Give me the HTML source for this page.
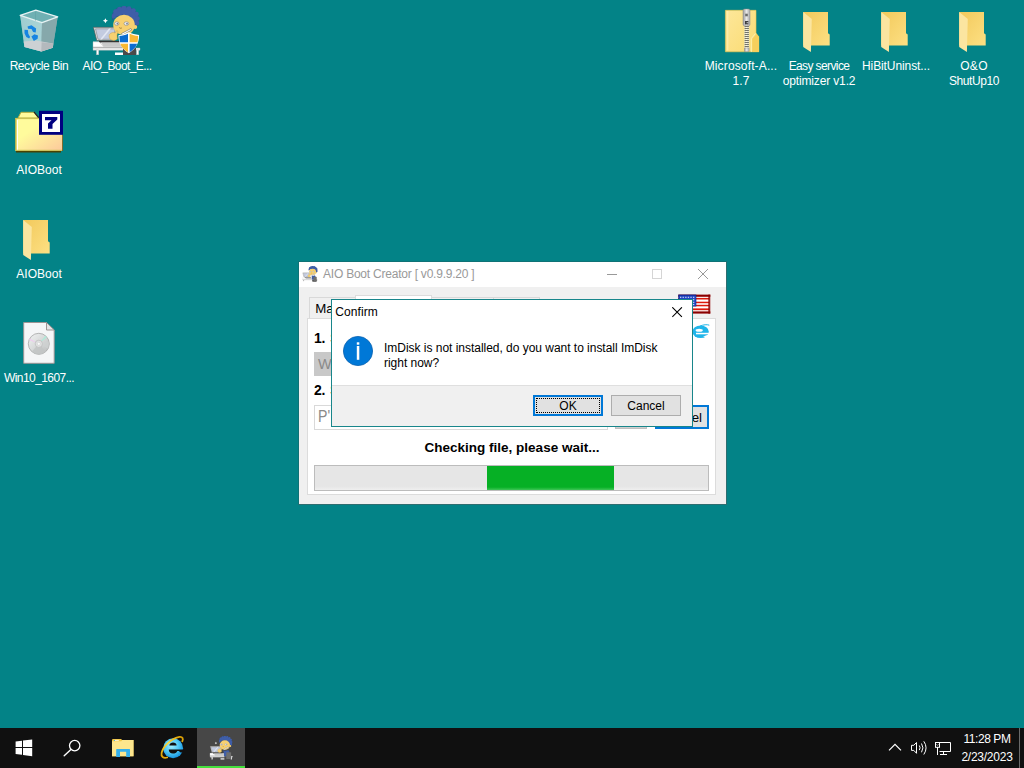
<!DOCTYPE html>
<html><head><meta charset="utf-8"><title>Desktop</title>
<style>
*{box-sizing:border-box;margin:0;padding:0}
html,body{width:1024px;height:768px;overflow:hidden}
body{background:#038387;font-family:"Liberation Sans",sans-serif;font-size:12px;position:relative;color:#000}
.abs{position:absolute}
.lbl{position:absolute;width:100px;text-align:center;color:#fff;font-size:12px;line-height:15px;white-space:nowrap;margin-top:1px}
#taskbar{position:absolute;left:0;top:728px;width:1024px;height:40px;background:#101010}
#win{position:absolute;left:298px;top:261px;width:429px;height:244px;background:#f0f0f0;border:1px solid #0f7276;border-right-color:#2e6d70;border-bottom-color:#2e6d70}
#title{position:absolute;left:0;top:0;width:427px;height:25px;background:#fff}
#dlg{position:absolute;left:331px;top:299px;width:362px;height:128px;background:#fff;border:1px solid #18868b}

#title .tt{position:absolute;left:24px;top:5px;font-size:12px;line-height:15px;color:#999;letter-spacing:-0.22px;white-space:nowrap}
.tab{position:absolute;background:#f0f0f0;border:1px solid #d9d9d9;border-bottom:none}
#pane{position:absolute;left:8px;top:56px;width:409px;height:177px;background:#fff;border:1px solid #dcdcdc}
.b{font-weight:700;font-size:14px;line-height:15px;letter-spacing:-.4px;word-spacing:1.800px;position:absolute;white-space:nowrap}
#dlg .cap{position:absolute;left:3.3px;top:5px;font-size:12px;line-height:15px;letter-spacing:0.08px}
#dlg .msg{position:absolute;left:52px;top:41px;font-size:12px;line-height:15px;white-space:nowrap;letter-spacing:-0.025px}
#dlg .foot{position:absolute;left:0;top:85px;width:360px;height:41px;background:#f0f0f0;border-top:1px solid #dfdfdf}
.btn{position:absolute;height:21px;width:70px;background:#e1e1e1;border:1px solid #adadad;font-size:12px;line-height:20px;text-align:center}
</style></head><body>

<!-- DESKTOP ICONS -->
<div id="desk">
<svg class="abs" style="left:18px;top:8px" width="42" height="46" viewBox="18 8 42 46">
<defs><linearGradient id="rbl" x1="0" y1="0" x2="1" y2="0"><stop offset="0" stop-color="#9fcdd0"/><stop offset="1" stop-color="#a9d3d6"/></linearGradient></defs>
<path d="M20.2 15.4L35.8 10.2L57.7 16.8L52.8 47.7L41.3 51.6L24.5 46.9Z" fill="#8ab0b3"/>
<path d="M20.2 15.4L42 22.7L41.3 51.6L24.5 46.9Z" fill="url(#rbl)"/>
<path d="M42 22.7L57.7 16.8L52.8 47.7L41.3 51.6Z" fill="#86a8ab"/>
<path d="M23.6 41.5L36 40.6L52.9 43.5L52.8 47.7L41.3 51.6L24.5 46.9Z" fill="#cdd1d4"/>
<path d="M41.6 42.2L53.3 43.6L52.8 47.7L41.3 51.6Z" fill="#b4b9bd"/>
<path d="M20.2 15.4L35.8 10.2L57.7 16.8L42 22.7Z" fill="#6fb0b3" stroke="#e6f2f3" stroke-width="1.3" stroke-linejoin="round"/>
<path d="M35 12L36 12L36 21L35 20.6Z" fill="#5f9ea1" opacity=".5"/>
<g fill="#1684e2"><path d="M27.5 26.5l4-1.3 4.6 3.4-.4 4-2.6-.6-1.6-3-3.4-.3z"/><path d="M24.5 29.7l3.4.4.4 3.6 1.8 3.4-1 1.3-2.800-1.500-1.800-3.600z"/><path d="M31.400 36.600l3-2.300 3.600 1.200-.400 3.300-3.800 2.300z"/></g>
</svg>
<div class="lbl" style="left:-11px;top:58px;letter-spacing:-0.42px">Recycle Bin</div>
<svg class="abs" style="left:91px;top:6px" width="50" height="50" viewBox="91 6 50 50">
<path d="M93.400 27.300H117L114.500 40.600H96.800Z" fill="#e2e2e2" stroke="#5a5a5a" stroke-width=".7"/><path d="M95.500 28.800H115.200L113.200 39.300H98Z" fill="#c3cbe0" stroke="#6e6e6e" stroke-width=".5"/><path d="M100 39.500L109 28.500H111L102 39.500Z" fill="#e3e7f2"/>
<path d="M93 41.800H122V48H93Z" fill="#fff"/><path d="M99 40.900H119.500V42.600H99Z" fill="#333"/><path d="M101 42.600H121L122 46.600H103.500Z" fill="#c9c9c9"/>
<path d="M93 41.800H99L103.500 46.600H122V48H93Z" fill="#fff" stroke="#b4b4b4" stroke-width=".4"/><path d="M93 48H140V50.200H93Z" fill="#f2f2f2" stroke="#b4b4b4" stroke-width=".4"/><path d="M93 47.300H122" stroke="#9a9a9a" stroke-width=".8"/>
<rect x="96.500" y="50" width="2.200" height="4.800" fill="#fff" stroke="#b4b4b4" stroke-width=".4"/><rect x="136.500" y="50" width="2.200" height="4.800" fill="#fff" stroke="#b4b4b4" stroke-width=".4"/>
<rect x="123" y="48" width="13" height="7" fill="#4a4a4a"/><path d="M115 52.500h8v2.500h-8z" fill="#fff"/>
<path d="M112.500 20c-1.500-6 2-12 8-12.600 6-1.400 12 .4 15.500 4.600 3 4 3 9 1.500 13.500l-3 .5-4-8-8-3-7 2z" fill="#3f5ea8" stroke="#2f4a8c" stroke-width=".6"/>
<circle cx="114" cy="16" r="2.300" fill="#3f5ea8"/><circle cx="115.5" cy="11.5" r="2.300" fill="#3f5ea8"/><circle cx="119.5" cy="9" r="2.300" fill="#3f5ea8"/><circle cx="124" cy="8" r="2.300" fill="#3f5ea8"/><circle cx="129" cy="8.5" r="2.300" fill="#3f5ea8"/><circle cx="133.5" cy="10.5" r="2.300" fill="#3f5ea8"/><circle cx="136.5" cy="14" r="2.300" fill="#3f5ea8"/><circle cx="137.5" cy="18.5" r="2.300" fill="#3f5ea8"/><circle cx="137" cy="23" r="2.300" fill="#3f5ea8"/><ellipse cx="124" cy="25" rx="10.800" ry="10.200" fill="#f7d070"/><circle cx="135.200" cy="27" r="2" fill="#f7d070"/>
<ellipse cx="116.800" cy="23.600" rx="2.200" ry="1.800" fill="#eef0f6" stroke="#777" stroke-width=".5"/><ellipse cx="126.400" cy="23.600" rx="2.400" ry="1.800" fill="#eef0f6" stroke="#777" stroke-width=".5"/><circle cx="117.400" cy="23.700" r=".9" fill="#7a7f8c"/><circle cx="127" cy="23.700" r=".9" fill="#7a7f8c"/>
<path d="M121.500 33.500L131 28.500L131.600 30L122.500 35Z" fill="#fff" stroke="#555" stroke-width=".5"/>
<path d="M119.300 27.500c.8 1 2 1 2.600.2" fill="none" stroke="#6b5020" stroke-width=".6"/>
<path d="M109.500 34.500c1.500-2 4-2.500 5.500-1.500l1.800-2.500c1 .2 1.400 1.200 1 2.200l-.8 2.300.3 4c-1.500 1.800-5 1.800-7 .3-1.200-1.500-1.500-3.300-.8-4.800z" fill="#f7d070" stroke="#c79a3a" stroke-width=".4"/>
<path d="M105.400 18.200l.9 1.800 1.700.7-1.700.7-.9 1.900-.9-1.900-1.700-.7 1.700-.7z" fill="#fff"/>
<path d="M118.400 35.200c3.500-.3 7-1.300 10.400-2.900 3.200 1.500 6.600 2.400 10.300 2.700 0 8-3.300 14-10.300 18.200-7-4.200-10.400-10.200-10.400-18z" fill="#fff"/>
<path d="M119.400 36.100c3-.3 5.800-1.100 8.600-2.400V42.200H119.900c-.3-1.900-.5-4-.5-6.100z" fill="#0c6cd0"/><path d="M129.600 33.700c2.700 1.200 5.500 2 8.500 2.300 0 2.200-.2 4.300-.6 6.200h-7.900z" fill="#f9b934"/><path d="M120.300 43.800H128v8.400c-4.100-2.600-6.600-5-7.700-8.400z" fill="#f9b934"/><path d="M129.600 43.800h7.500c-1.100 3.400-3.500 6-7.500 8.500z" fill="#0c6cd0"/>
</svg>
<div class="lbl" style="left:67px;top:58px;letter-spacing:-0.59px">AIO_Boot_E...</div>
<svg class="abs" style="left:14px;top:108px" width="52" height="46" viewBox="14 108 52 46">
<defs><linearGradient id="z7" x1="0" y1="0" x2="1" y2="1"><stop offset=".35" stop-color="#fffb9c"/><stop offset="1" stop-color="#fcc89c"/></linearGradient></defs>
<path d="M16 152.400H61V150H16Z" fill="#4a4200"/><path d="M62 135V151H63V135Z" fill="#4a4200"/>
<path d="M18 118L21 112.300H34.500L38.500 118Z" fill="#fffb9c" stroke="#b5ad3c" stroke-width="1"/><path d="M34 112l4.800 5.800" stroke="#222" stroke-width="1.200"/>
<rect x="15.300" y="118" width="47" height="32.800" fill="url(#z7)"/><path d="M15.800 118V150.800" stroke="#b5ad3c" stroke-width="1.200"/><path d="M15.300 118.500H40" stroke="#c9c257" stroke-width="1.200"/><path d="M17.500 120V150" stroke="#fff" stroke-width="1"/><path d="M15.300 150.300H62" stroke="#c9c257" stroke-width="1"/>
<rect x="39" y="110.800" width="24" height="24" fill="#000080"/><rect x="42" y="114" width="18" height="18" fill="#fff"/>
<path d="M45 117H57.300V119.500L52.500 124V128.800H48V123.500L51.500 120.300H45Z" fill="#000080"/>
</svg>
<div class="lbl" style="left:-11px;top:162px;letter-spacing:0.02px">AIOBoot</div>
<svg class="abs" style="left:23px;top:220px" width="28" height="42" viewBox="0 0 28 42"><defs><linearGradient id="fg0" x1="0" y1="0" x2="1" y2="1"><stop offset="0" stop-color="#f2c95c"/><stop offset="1" stop-color="#fde083"/></linearGradient></defs><path d="M.2 0H25V21.3L26.7 22.6V33.6H.2Z" fill="url(#fg0)"/><path d="M.2 0L8.8 7.1L7.9 40L.2 35Z" fill="#fbe5a0"/></svg>
<div class="lbl" style="left:-11px;top:266px;letter-spacing:0.02px">AIOBoot</div>
<svg class="abs" style="left:22px;top:321px" width="34" height="44" viewBox="22 321 34 44">
<defs><linearGradient id="cd" x1="0" y1="0" x2="1" y2="1"><stop offset="0" stop-color="#f2f4f4"/><stop offset=".5" stop-color="#d6d8d8"/><stop offset="1" stop-color="#b9bbbb"/></linearGradient></defs>
<path d="M23.700 322.500H46.500L54.200 330V363.300H23.700Z" fill="#f5f6f7" stroke="#9d9494" stroke-width="1"/>
<path d="M46.500 322.500V330H54.200Z" fill="#e4e5e6" stroke="#9d9494" stroke-width="1" stroke-linejoin="round"/>
<circle cx="38.800" cy="343.800" r="10.500" fill="url(#cd)" stroke="#a5a5a5" stroke-width=".8"/>
<clipPath id="cdc"><circle cx="38.800" cy="343.800" r="10.400"/></clipPath><path d="M38.800 343.800L28 356H50Z" fill="#c2c4c4" opacity=".85" clip-path="url(#cdc)"/><path d="M38.800 343.800L50 341V350Z" fill="#cfd1d1" opacity=".7" clip-path="url(#cdc)"/>
<path d="M38.800 343.800L46.800 337.200L45.500 335.800Z" fill="#a8ecd8" opacity=".85"/><path d="M38.800 343.800L29 340L29.600 338.500Z" fill="#f0c8ee" opacity=".85"/>
<circle cx="38.800" cy="343.800" r="3.600" fill="#e0e1e1" stroke="#b5b5b5" stroke-width=".6"/><circle cx="38.800" cy="343.800" r="1.500" fill="#fafafa" stroke="#c0c0c0" stroke-width=".4"/>
</svg>
<div class="lbl" style="left:-11px;top:370px;letter-spacing:-0.57px">Win10_1607...</div>
<svg class="abs" style="left:722px;top:6px" width="40" height="48" viewBox="722 6 40 48">
<defs><linearGradient id="zf" x1="0" y1="0" x2="1" y2="1"><stop offset="0" stop-color="#fde79a"/><stop offset="1" stop-color="#fadb72"/></linearGradient><linearGradient id="zp" x1="0" y1="0" x2="1" y2="0"><stop offset="0" stop-color="#9a9a9a"/><stop offset=".5" stop-color="#e8e8e8"/><stop offset="1" stop-color="#a8a8a8"/></linearGradient></defs>
<path d="M725.400 10.300H756V33L758.800 36.700V51.800H725.400Z" fill="url(#zf)" stroke="#f0c64e" stroke-width=".6"/>
<path d="M727.800 11V50.500" stroke="#fff4c0" stroke-width=".8"/><path d="M751.300 52V38.500L755.500 33.500" stroke="#fff0b0" stroke-width="1" fill="none"/><path d="M752.300 52V39L756.200 34.200L759 36.700V52Z" fill="#f7cf5c"/>
<rect x="744.300" y="25" width="4.900" height="24" fill="#e9e4c8"/><rect x="744.600" y="26.0" width="4.300" height="1" fill="#74746a"/><rect x="744.600" y="28.0" width="4.300" height="1" fill="#74746a"/><rect x="744.600" y="30.0" width="4.300" height="1" fill="#74746a"/><rect x="744.600" y="32.0" width="4.300" height="1" fill="#74746a"/><rect x="744.600" y="34.0" width="4.300" height="1" fill="#74746a"/><rect x="744.600" y="36.0" width="4.300" height="1" fill="#74746a"/><rect x="744.600" y="38.0" width="4.300" height="1" fill="#74746a"/><rect x="744.600" y="40.0" width="4.300" height="1" fill="#74746a"/><rect x="744.600" y="42.0" width="4.300" height="1" fill="#74746a"/><rect x="744.600" y="44.0" width="4.300" height="1" fill="#74746a"/><rect x="744.600" y="46.0" width="4.300" height="1" fill="#74746a"/><path d="M746.700 25V48" stroke="#fffdf0" stroke-width=".9" stroke-dasharray="1 1"/>
<rect x="743" y="9" width="7" height="16.800" rx="1.500" fill="url(#zp)" stroke="#8a8a8a" stroke-width=".5"/><rect x="745.200" y="13.700" width="2.600" height="2.600" fill="#6a6a6a"/><rect x="745" y="21" width="3.400" height="3.400" fill="#3c3c3c"/><rect x="746.600" y="22.300" width="1.800" height=".9" fill="#ddd"/>
<rect x="744.300" y="48" width="4.800" height="3.600" fill="url(#zp)" stroke="#8a8a8a" stroke-width=".4"/>
</svg>
<div class="lbl" style="left:691px;top:58px;letter-spacing:0.14px">Microsoft-A...<br>1.7</div>
<svg class="abs" style="left:803px;top:12px" width="28" height="42" viewBox="0 0 28 42"><defs><linearGradient id="fg1" x1="0" y1="0" x2="1" y2="1"><stop offset="0" stop-color="#f2c95c"/><stop offset="1" stop-color="#fde083"/></linearGradient></defs><path d="M.2 0H25V21.3L26.7 22.6V33.6H.2Z" fill="url(#fg1)"/><path d="M.2 0L8.8 7.1L7.9 40L.2 35Z" fill="#fbe5a0"/></svg>
<svg class="abs" style="left:881px;top:12px" width="28" height="42" viewBox="0 0 28 42"><defs><linearGradient id="fg2" x1="0" y1="0" x2="1" y2="1"><stop offset="0" stop-color="#f2c95c"/><stop offset="1" stop-color="#fde083"/></linearGradient></defs><path d="M.2 0H25V21.3L26.7 22.6V33.6H.2Z" fill="url(#fg2)"/><path d="M.2 0L8.8 7.1L7.9 40L.2 35Z" fill="#fbe5a0"/></svg>
<svg class="abs" style="left:959px;top:12px" width="28" height="42" viewBox="0 0 28 42"><defs><linearGradient id="fg3" x1="0" y1="0" x2="1" y2="1"><stop offset="0" stop-color="#f2c95c"/><stop offset="1" stop-color="#fde083"/></linearGradient></defs><path d="M.2 0H25V21.3L26.7 22.6V33.6H.2Z" fill="url(#fg3)"/><path d="M.2 0L8.8 7.1L7.9 40L.2 35Z" fill="#fbe5a0"/></svg>
<div class="lbl" style="left:769px;top:58px;letter-spacing:0px"><span style="letter-spacing:-0.61px">Easy service</span><br><span style="letter-spacing:-0.14px">optimizer v1.2</span></div>
<div class="lbl" style="left:846px;top:58px;letter-spacing:-0.1px">HiBitUninst...</div>
<div class="lbl" style="left:924px;top:58px;letter-spacing:0px"><span style="letter-spacing:0.27px">O&amp;O</span><br><span style="letter-spacing:-0.42px">ShutUp10</span></div>
</div>

<!-- MAIN WINDOW -->
<div id="win">
 <div id="title">
  <svg class="abs" style="left:3px;top:4px" width="16" height="16" viewBox="91 6 50 50">
<path d="M93.400 27.300H117L114.500 40.600H96.800Z" fill="#e2e2e2" stroke="#5a5a5a" stroke-width=".7"/><path d="M95.500 28.800H115.200L113.200 39.300H98Z" fill="#c3cbe0" stroke="#6e6e6e" stroke-width=".5"/><path d="M100 39.500L109 28.500H111L102 39.500Z" fill="#e3e7f2"/>
<path d="M93 41.800H122V48H93Z" fill="#fff"/><path d="M99 40.900H119.500V42.600H99Z" fill="#333"/><path d="M101 42.600H121L122 46.600H103.500Z" fill="#c9c9c9"/>
<path d="M93 41.800H99L103.500 46.600H122V48H93Z" fill="#fff" stroke="#b4b4b4" stroke-width=".4"/><path d="M93 48H140V50.200H93Z" fill="#f2f2f2" stroke="#b4b4b4" stroke-width=".4"/><path d="M93 47.300H122" stroke="#9a9a9a" stroke-width=".8"/>
<rect x="96.500" y="50" width="2.200" height="4.800" fill="#fff" stroke="#b4b4b4" stroke-width=".4"/><rect x="136.500" y="50" width="2.200" height="4.800" fill="#fff" stroke="#b4b4b4" stroke-width=".4"/>
<rect x="123" y="48" width="13" height="7" fill="#4a4a4a"/><path d="M115 52.500h8v2.500h-8z" fill="#fff"/>
<path d="M112.500 20c-1.500-6 2-12 8-12.600 6-1.400 12 .4 15.500 4.600 3 4 3 9 1.500 13.500l-3 .5-4-8-8-3-7 2z" fill="#3f5ea8" stroke="#2f4a8c" stroke-width=".6"/>
<circle cx="114" cy="16" r="2.300" fill="#3f5ea8"/><circle cx="115.5" cy="11.5" r="2.300" fill="#3f5ea8"/><circle cx="119.5" cy="9" r="2.300" fill="#3f5ea8"/><circle cx="124" cy="8" r="2.300" fill="#3f5ea8"/><circle cx="129" cy="8.5" r="2.300" fill="#3f5ea8"/><circle cx="133.5" cy="10.5" r="2.300" fill="#3f5ea8"/><circle cx="136.5" cy="14" r="2.300" fill="#3f5ea8"/><circle cx="137.5" cy="18.5" r="2.300" fill="#3f5ea8"/><circle cx="137" cy="23" r="2.300" fill="#3f5ea8"/><ellipse cx="124" cy="25" rx="10.800" ry="10.200" fill="#f7d070"/><circle cx="135.200" cy="27" r="2" fill="#f7d070"/>
<ellipse cx="116.800" cy="23.600" rx="2.200" ry="1.800" fill="#eef0f6" stroke="#777" stroke-width=".5"/><ellipse cx="126.400" cy="23.600" rx="2.400" ry="1.800" fill="#eef0f6" stroke="#777" stroke-width=".5"/><circle cx="117.400" cy="23.700" r=".9" fill="#7a7f8c"/><circle cx="127" cy="23.700" r=".9" fill="#7a7f8c"/>
<path d="M121.500 33.500L131 28.500L131.600 30L122.500 35Z" fill="#fff" stroke="#555" stroke-width=".5"/>
<path d="M119.300 27.500c.8 1 2 1 2.600.2" fill="none" stroke="#6b5020" stroke-width=".6"/>
<path d="M109.500 34.500c1.500-2 4-2.500 5.500-1.500l1.800-2.500c1 .2 1.400 1.200 1 2.200l-.8 2.300.3 4c-1.500 1.800-5 1.800-7 .3-1.200-1.500-1.500-3.300-.8-4.800z" fill="#f7d070" stroke="#c79a3a" stroke-width=".4"/>
<path d="M105.400 18.200l.9 1.800 1.700.7-1.700.7-.9 1.900-.9-1.900-1.700-.7 1.700-.7z" fill="#fff"/>
<path d="M121 35.500c3 1.500 7 1.500 10-.5l2.500 4v9h-11z" fill="#3f5ea8"/><rect x="127" y="40" width="10" height="14" fill="#6e6e6e"/>
</svg><div class="tt">AIO Boot Creator [ v0.9.9.20 ]</div>
  <svg class="abs" style="left:308px;top:12px" width="10" height="1"><rect width="10" height="1" fill="#999"/></svg>
  <svg class="abs" style="left:353px;top:7px" width="10" height="10"><rect x=".5" y=".5" width="9" height="9" fill="none" stroke="#d5d5d5"/></svg>
  <svg class="abs" style="left:399px;top:7px" width="10" height="10"><path d="M0 0L10 10M10 0L0 10" stroke="#999" stroke-width="1" fill="none"/></svg>
 </div>
 <!-- tabs -->
 <div class="tab" style="left:10px;top:35px;width:48px;height:22px"><span class="abs" style="left:5.200px;top:3px;font-size:13.3px;line-height:15px">Main</span></div>
 <div class="tab" style="left:132px;top:35px;width:63px;height:22px"></div>
 <div class="tab" style="left:194px;top:35px;width:47px;height:22px"></div>
 <div id="pane">
  <div class="b" style="left:6px;top:12px">1. S</div>
  <div class="abs" style="left:6px;top:33px;width:300px;height:24px;background:#c8c8c8"><span class="abs" style="left:4px;top:4px;font-size:14.5px;line-height:16px;color:#8a8a8a">Win</span></div>
  <div class="b" style="left:6px;top:64px">2. S</div>
  <div class="abs" style="left:6px;top:86px;width:294px;height:25px;background:#fff;border:1px solid #d9d9d9"><span class="abs" style="left:3px;top:1px;font-size:16px;line-height:20px;color:#8a8a8a;transform:scaleX(.88);transform-origin:0 0">P'</span></div>
  <div class="abs" style="left:307px;top:89px;width:32px;height:21px;background:#cfcfcf;border:1px solid #bfbfbf"></div>
  <div class="abs" style="left:347px;top:86px;width:54px;height:24px;background:#e1e1e1;border:2px solid #0078d7"><span class="abs" style="right:5px;top:3px;font-size:13.3px;line-height:15px">Cancel</span></div>
  <div class="b" style="left:0;width:408px;top:121px;text-align:center;font-size:13.5px;letter-spacing:0;word-spacing:0">Checking file, please wait...</div>
  <div class="abs" style="left:6px;top:146px;width:395px;height:26px;background:linear-gradient(#e6e6e6 85%,#efefef);border:1px solid #bcbcbc"><div class="abs" style="left:172px;top:0;width:127px;height:24px;background:linear-gradient(#06b025 88%,#3fc657)"></div></div>
 </div>
 <div class="tab" style="left:56px;top:33px;width:77px;height:24px;background:#fff;border-color:#dcdcdc"></div>
 <!-- flag -->
 <svg class="abs" style="left:379px;top:32.400px" width="33" height="20" viewBox="0 0 33 20"><rect x=".3" y=".6" width="32" height="19" fill="#fff"/><rect x=".3" y=".6" width="32" height="2.200" fill="#8b0000"/><rect x=".3" y="17.400" width="32" height="2.200" fill="#8b0000"/><g fill="#dd1a0c"><rect x=".3" y="3.900" width="31" height="1.600"/><rect x=".3" y="7.700" width="31" height="1.500"/><rect x=".3" y="10.800" width="31" height="1.500"/><rect x=".3" y="14.400" width="31" height="1.800"/></g><rect x="30.300" y=".6" width="2" height="19" fill="#8b0000" opacity=".85"/><rect x=".3" y=".6" width="18" height="11.800" fill="#0c1f8c"/><rect x="1.300" y="1.600" width="16.500" height="10.300" fill="#2447c4"/><path d="M2 3.300H17M2 5.800H17M2 8.300H17M2 10.600H17" stroke="#fff" stroke-width="1" stroke-dasharray="1.300 1.300" opacity=".9"/></svg>
 <svg class="abs" style="left:392px;top:61px" width="20" height="18" viewBox="691 323 20 18"><ellipse cx="700.600" cy="331.800" rx="8.200" ry="6.300" fill="#1fb5ea"/><ellipse cx="699.200" cy="330.200" rx="3.600" ry="1.500" fill="#fff"/><rect x="696" y="332.800" width="13.500" height="1.500" fill="#fff"/><path d="M703 336.500L709.500 334.300V338Z" fill="#fff"/><path d="M700 326.200C703 324.600 707.500 324.300 709.300 325.200" stroke="#1fb5ea" stroke-width="1" fill="none"/></svg>
</div>

<!-- DIALOG -->
<div id="dlg">
 <div class="cap">Confirm</div>
 <svg class="abs" style="left:340px;top:7px" width="11" height="11"><path d="M.3 .3L9.900 9.900M9.900 .3L.3 9.900" stroke="#000" stroke-width="1.100" fill="none"/></svg>
 <svg class="abs" style="left:10px;top:35px" width="32" height="32" viewBox="0 0 32 32"><circle cx="16" cy="16" r="14.600" fill="#0078d7" stroke="#0a62b0" stroke-width=".8"/><rect x="14.800" y="11" width="2.500" height="13.800" fill="#fff"/><rect x="14.800" y="7.300" width="2.500" height="2.400" fill="#fff"/></svg>
 <div class="msg">ImDisk is not installed, do you want to install ImDisk<br>right now?</div>
 <div class="foot">
  <div class="btn" style="left:201px;top:9px;border:2px solid #0078d7;line-height:18px"><span class="abs" style="left:1px;top:1px;right:1px;bottom:1px;border:1px dotted #000"></span>OK</div>
  <div class="btn" style="left:279px;top:9px">Cancel</div>
 </div>
</div>

<!-- TASKBAR -->
<div id="taskbar">
 <svg class="abs" style="left:15px;top:11px" width="18" height="18" viewBox="15 739 18 18"><path d="M15.600 741.600L22 740.800V747H15.600Z M23 740.600L32.200 739.500V747H23Z M15.600 748H22V754.800L15.600 754Z M23 748H32.200V756.300L23 755Z" fill="#fff"/></svg>
 <svg class="abs" style="left:62px;top:10px" width="20" height="20" viewBox="62 738 20 20"><circle cx="74.700" cy="745.600" r="5.200" fill="none" stroke="#fff" stroke-width="1.300"/><path d="M70.900 749.500L64.200 755.800" stroke="#fff" stroke-width="1.400" stroke-linecap="round"/></svg>
 <!-- explorer -->
 <svg class="abs" style="left:111px;top:9px" width="24" height="21" viewBox="111 737 24 21"><path d="M112 740Q112 738.900 113.200 738.900H121L122.200 740H133.500V756.200H112Z" fill="#f2c744"/><rect x="114" y="739.900" width="4.800" height="1" fill="#fff6d8"/><rect x="114" y="739.900" width="1" height="1" fill="#3aa8e0"/><path d="M112 741.200H121.400L122.200 740H133.500V756.200H112Z" fill="#fde68d"/><path d="M116.200 749.500Q116.200 748.900 116.800 748.900H129.400Q130 748.900 130 749.500V757H126.200V751.800H120V757H116.200Z" fill="#35b0ec"/></svg>
 <!-- IE -->
 <svg class="abs" style="left:159px;top:6px" width="27" height="28" viewBox="159 734 27 28"><defs><radialGradient id="ieg" cx=".42" cy=".38" r=".62"><stop offset="0" stop-color="#a0f0ff"/><stop offset=".6" stop-color="#4cc6f4"/><stop offset="1" stop-color="#1a96e0"/></radialGradient><linearGradient id="ier" x1="0" y1="1" x2="1" y2="0"><stop offset="0" stop-color="#e0a000"/><stop offset=".5" stop-color="#ffd83a"/><stop offset="1" stop-color="#d69a00"/></linearGradient></defs>
 <circle cx="173.100" cy="748.200" r="10" fill="url(#ieg)"/>
 <path d="M169.300 745.500C169.500 743.600 171.300 742.500 173 742.500C175 742.500 176.600 743.700 176.600 745.500Z" fill="#101010"/>
 <path d="M168.700 749.500H184V751H177.300C176.500 752.800 175 753.600 172.900 753.600C170.400 753.600 168.900 752 168.700 749.500Z" fill="#101010"/>
 <path d="M179 751H184V754.500L182.500 752.300C181.500 752.900 180 752.500 179 751Z" fill="#101010"/>
 <path d="M167.200 757.500C163.300 758.600 160.800 756.600 161.600 753C163 746.200 172 738.200 179.500 736.900C182.600 736.500 183.600 738.600 182.300 741.300" fill="none" stroke="url(#ier)" stroke-width="1.800" stroke-linecap="round"/></svg>
 <!-- active app -->
 <div class="abs" style="left:197px;top:0;width:48px;height:40px;background:#474747"></div><div class="abs" style="left:197px;top:38px;width:48px;height:2px;background:#45e03d"></div>
 <svg class="abs" style="left:209px;top:8px" width="24" height="24" viewBox="91 6 50 50">
<path d="M93.400 27.300H117L114.500 40.600H96.800Z" fill="#e2e2e2" stroke="#5a5a5a" stroke-width=".7"/><path d="M95.500 28.800H115.200L113.200 39.300H98Z" fill="#c3cbe0" stroke="#6e6e6e" stroke-width=".5"/><path d="M100 39.500L109 28.500H111L102 39.500Z" fill="#e3e7f2"/>
<path d="M93 41.800H122V48H93Z" fill="#fff"/><path d="M99 40.900H119.500V42.600H99Z" fill="#333"/><path d="M101 42.600H121L122 46.600H103.500Z" fill="#c9c9c9"/>
<path d="M93 41.800H99L103.500 46.600H122V48H93Z" fill="#fff" stroke="#b4b4b4" stroke-width=".4"/><path d="M93 48H140V50.200H93Z" fill="#f2f2f2" stroke="#b4b4b4" stroke-width=".4"/><path d="M93 47.300H122" stroke="#9a9a9a" stroke-width=".8"/>
<rect x="96.500" y="50" width="2.200" height="4.800" fill="#fff" stroke="#b4b4b4" stroke-width=".4"/><rect x="136.500" y="50" width="2.200" height="4.800" fill="#fff" stroke="#b4b4b4" stroke-width=".4"/>
<rect x="123" y="48" width="13" height="7" fill="#4a4a4a"/><path d="M115 52.500h8v2.500h-8z" fill="#fff"/>
<path d="M112.500 20c-1.500-6 2-12 8-12.600 6-1.400 12 .4 15.500 4.600 3 4 3 9 1.500 13.500l-3 .5-4-8-8-3-7 2z" fill="#3f5ea8" stroke="#2f4a8c" stroke-width=".6"/>
<circle cx="114" cy="16" r="2.300" fill="#3f5ea8"/><circle cx="115.5" cy="11.5" r="2.300" fill="#3f5ea8"/><circle cx="119.5" cy="9" r="2.300" fill="#3f5ea8"/><circle cx="124" cy="8" r="2.300" fill="#3f5ea8"/><circle cx="129" cy="8.5" r="2.300" fill="#3f5ea8"/><circle cx="133.5" cy="10.5" r="2.300" fill="#3f5ea8"/><circle cx="136.5" cy="14" r="2.300" fill="#3f5ea8"/><circle cx="137.5" cy="18.5" r="2.300" fill="#3f5ea8"/><circle cx="137" cy="23" r="2.300" fill="#3f5ea8"/><ellipse cx="124" cy="25" rx="10.800" ry="10.200" fill="#f7d070"/><circle cx="135.200" cy="27" r="2" fill="#f7d070"/>
<ellipse cx="116.800" cy="23.600" rx="2.200" ry="1.800" fill="#eef0f6" stroke="#777" stroke-width=".5"/><ellipse cx="126.400" cy="23.600" rx="2.400" ry="1.800" fill="#eef0f6" stroke="#777" stroke-width=".5"/><circle cx="117.400" cy="23.700" r=".9" fill="#7a7f8c"/><circle cx="127" cy="23.700" r=".9" fill="#7a7f8c"/>
<path d="M121.500 33.500L131 28.500L131.600 30L122.500 35Z" fill="#fff" stroke="#555" stroke-width=".5"/>
<path d="M119.300 27.500c.8 1 2 1 2.600.2" fill="none" stroke="#6b5020" stroke-width=".6"/>
<path d="M109.500 34.500c1.500-2 4-2.500 5.500-1.500l1.800-2.500c1 .2 1.400 1.200 1 2.200l-.8 2.300.3 4c-1.500 1.800-5 1.800-7 .3-1.200-1.500-1.500-3.300-.8-4.800z" fill="#f7d070" stroke="#c79a3a" stroke-width=".4"/>
<path d="M105.400 18.200l.9 1.800 1.700.7-1.700.7-.9 1.900-.9-1.900-1.700-.7 1.700-.7z" fill="#fff"/>
<path d="M121 35.500c3 1.500 7 1.500 10-.5l2.500 4v9h-11z" fill="#3f5ea8"/><rect x="127" y="40" width="10" height="14" fill="#6e6e6e"/>
</svg>
 <!-- tray -->
 <svg class="abs" style="left:888px;top:15px" width="14" height="9" viewBox="0 0 14 9"><path d="M1 7.300L7 1.300L13 7.300" fill="none" stroke="#fff" stroke-width="1.200"/></svg>
 <svg class="abs" style="left:909px;top:12px" width="20" height="16" viewBox="909 740 20 16"><path d="M911.500 745.300H913.800L916.500 742.500V753.300L913.800 750.400H911.500Z" fill="none" stroke="#fff" stroke-width="1"/><path d="M919.300 745.500Q920.900 747.800 919.300 750.100M921.500 743.500Q924.400 747.800 921.500 752.300M923.800 741.300Q928.300 747.800 923.800 754.500" fill="none" stroke="#fff" stroke-width="1"/></svg>
 <svg class="abs" style="left:934px;top:13px" width="18" height="15" viewBox="934 741 18 15"><path d="M939.500 742.500H950.500V751.500H939.500" fill="none" stroke="#fff" stroke-width="1"/><path d="M943.500 751.500V754.500M940 754.500H947" fill="none" stroke="#fff" stroke-width="1"/><rect x="935.500" y="742.500" width="4" height="4.800" fill="#101010" stroke="#fff" stroke-width="1"/><path d="M937.500 747V755" fill="none" stroke="#fff" stroke-width="1"/><path d="M936.500 744.300L937.500 745.400L938.500 744.300" fill="none" stroke="#fff" stroke-width=".7"/></svg>
 <div class="abs" style="left:937px;top:4px;width:100px;text-align:center;color:#fff;font-size:12px;line-height:15px;letter-spacing:-0.44px;white-space:nowrap">11:28 PM</div>
 <div class="abs" style="left:937px;top:22px;width:100px;text-align:center;color:#fff;font-size:12px;line-height:15px;letter-spacing:-0.24px;white-space:nowrap">2/23/2023</div>
 <div class="abs" style="left:1019px;top:0;width:1px;height:40px;background:#6a6a6a"></div>
</div>

</body></html>
